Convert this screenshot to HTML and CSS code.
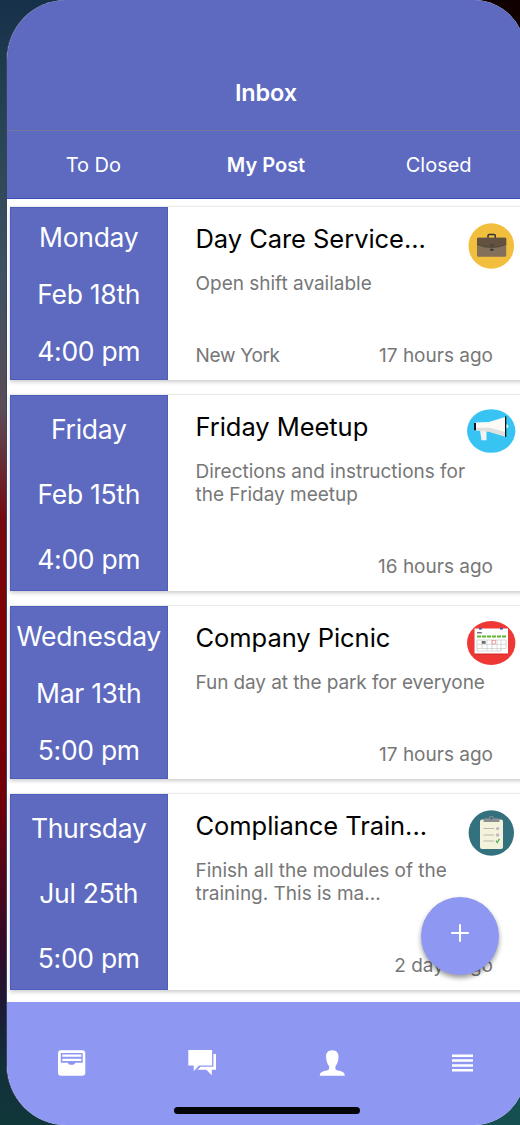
FILE: index.html
```html
<!DOCTYPE html>
<html lang="en">
<head>
<meta charset="utf-8">
<title>Inbox</title>
<link rel="stylesheet" href="styles.css">
</head>
<body>
<div class="phone">
  <header class="header"><h1 class="header-title">Inbox</h1></header>
  <nav class="tabs">
    <span class="tab">To Do</span>
    <span class="tab tab-active">My Post</span>
    <span class="tab">Closed</span>
  </nav>
  <main class="list">
    <article class="card">
      <div class="when"><span>Monday</span><span>Feb 18th</span><span>4:00 pm</span></div>
      <div class="body">
        <h2 class="title">Day Care Service...</h2>
        <p class="desc">Open shift available</p>
        <div class="meta"><span class="place">New York</span><span class="ago">17 hours ago</span></div>
      </div>
      <svg class="badge badge-job" viewBox="0 0 60 60">
        <circle cx="31.3" cy="31" r="22.8" fill="#f2be3e"/>
        <path d="M28 23v-2.2q0-1.3 1.300-1.300h4.700q1.300 0 1.300 1.300V23" fill="none" stroke="#2c3638" stroke-width="1.500"/>
        <rect x="17" y="22.700" width="29.200" height="19" rx="1.200" fill="#84705a"/>
        <path d="M18 22.700h27.200q1 0 1 1v5.800q-7 3-14.600 3t-14.600-3v-5.800q0-1 1-1z" fill="#62523f"/>
        <path d="M17 29.500q7 3 14.600 3t14.600-3" fill="none" stroke="#4c4233" stroke-width=".8"/>
        <rect x="30" y="29.300" width="3.500" height="1.800" fill="#444240"/><rect x="30" y="33.800" width="3.500" height="2" rx=".7" fill="#2c3638"/>
      </svg>
    </article>
    <article class="card card-tall">
      <div class="when"><span>Friday</span><span>Feb 15th</span><span>4:00 pm</span></div>
      <div class="body">
        <h2 class="title">Friday Meetup</h2>
        <p class="desc">Directions and instructions for the Friday meetup</p>
        <div class="meta"><span class="ago">16 hours ago</span></div>
      </div>
      <svg class="badge badge-news" viewBox="0 0 60 60">
        <ellipse cx="31.200" cy="31" rx="24.200" ry="21.800" fill="#38c4f3"/>
        <circle cx="46.300" cy="26.300" r="2" fill="#e8f5fa"/>
        <path d="M20 30h6.500v10.200h-5z" fill="#f3f3f3"/>
        <path d="M15.500 22.500l13.500-.5L45 17v19.500L29 31.500l-13.500-1.500z" fill="#fbfaf7"/>
        <path d="M15.500 27.800H30l15 4.200v4.500L29 31.700 15.500 30.500z" fill="#dedfdf"/>
        <path d="M14 23h2v7.200h-2zM45 16.300h1.300v20.700H45z" fill="#10171a"/>
      </svg>
    </article>
    <article class="card">
      <div class="when"><span>Wednesday</span><span>Mar 13th</span><span>5:00 pm</span></div>
      <div class="body">
        <h2 class="title">Company Picnic</h2>
        <p class="desc desc-fit">Fun day at the park for everyone</p>
        <div class="meta"><span class="ago">17 hours ago</span></div>
      </div>
      <svg class="badge badge-event" viewBox="0 0 60 60">
        <ellipse cx="31.200" cy="31" rx="24.200" ry="22" fill="#ee3836"/>
        <path d="M14 17h34v26H14z" fill="#d92d2c"/>
        <path d="M14.500 16.500H48v25H14.500z" fill="#fff"/>
        <path d="M19 16h2.800v1.400H19zM40 16h2.800v1.400H40z" fill="#2455b5"/>
        <path d="M17 20.800h4.800" stroke="#555" stroke-width="1.200"/>
        <path d="M17 24.500h29" stroke="#5cb82e" stroke-width="2" stroke-dasharray="4 1"/>
        <path d="M17 28h29v8.500H17zM17 32.300h29M22 28v8.500M27 28v10.500M32 28v10.500M37 28v10.500M41 28v10.500M17 36.500v2.500h24v-2.500" fill="none" stroke="#c9c9c9" stroke-width=".7"/>
        <path d="M21.800 29h3.800v2.800h-3.800z" fill="#6f6f6f"/>
        <path d="M32 28.500h3.500v3.500H32z" fill="none" stroke="#ef7777" stroke-width=".6"/>
      </svg>
    </article>
    <article class="card card-tall">
      <div class="when"><span>Thursday</span><span>Jul 25th</span><span>5:00 pm</span></div>
      <div class="body">
        <h2 class="title">Compliance Train...</h2>
        <p class="desc">Finish all the modules of the training. This is ma...</p>
        <div class="meta"><span class="ago">2 days ago</span></div>
      </div>
      <svg class="badge badge-task" viewBox="0 0 60 60">
        <circle cx="31.300" cy="33" r="22.700" fill="#34717f"/>
        <rect x="20" y="19.500" width="23" height="29.500" rx="2" fill="#f5f2dc"/>
        <path d="M23.500 22v-2q0-1.800 2-1.800h3.500q0-2.200 2.300-2.200t2.400 2.200h3.600q2.200 0 2.200 1.800v2z" fill="#8b8f93"/>
        <circle cx="31.400" cy="18.300" r="1.200" fill="#34717f"/>
        <path d="M23.500 28.500h10.500M23.500 35h10.500M23.500 41h10.500" stroke="#b9b9b0" stroke-width="1"/>
        <circle cx="37.600" cy="28.600" r="1.700" fill="#bcbcbc"/><circle cx="37.600" cy="35" r="1.700" fill="#bcbcbc"/>
        <path d="M36 40.700l1.300 1.900 2-3.700" fill="none" stroke="#4bae5d" stroke-width="1.200"/>
      </svg>
    </article>
    <button class="fab" aria-label="Add"><svg viewBox="0 0 18 18"><path d="M9 1v16M1 9h16" stroke="#fff" stroke-width="2" stroke-linecap="round"/></svg></button>
  </main>
  <footer class="nav">
    <div class="nav-item"><svg viewBox="0 0 30 30">
      <path fill="#fff" fill-rule="evenodd" d="M4 2.300h21.300q3 0 3 3v19.400q0 3-3 3H4q-3 0-3-3V5.300q0-3 3-3zM3.800 5v9.700H11q0 2 3.500 2t3.500-2h7.700V5z"/>
      <path fill="#fff" d="M5.300 6.500h19v2.300h-19zM5.300 10.800h19v2.200h-19z"/>
    </svg></div>
    <div class="nav-item"><svg viewBox="0 0 30 30">
      <path fill="#fff" d="M1.300 2h23.800v15.500H12l-5.300 5.800v-5.800H1.300z"/>
      <path fill="#fff" d="M26.400 6H29v15.700h-4.200v5.600l-5.500-5.600H10.500l3-3h12.900z"/>
    </svg></div>
    <div class="nav-item"><svg viewBox="0 0 30 30">
      <path fill="#fff" d="M15.200 2.200c4.200 0 6.600 2.800 6.300 6.700-.1 4-1.300 7.100-3 9.300-.4 3.100.3 3.900 3.500 4.500 4 .8 5.800 2 5.800 5H2.800c0-3 1.800-4.200 5.800-5 3.200-.6 3.900-1.400 3.500-4.500-1.700-2.200-2.900-5.300-3-9.300-.3-3.900 1.900-6.700 6.100-6.700z"/>
    </svg></div>
    <div class="nav-item"><svg viewBox="0 0 30 30">
      <path fill="#fff" d="M5 6.600h21v2.500H5zM5 11.200h21v2.500H5zM5 16.200h21v2.500H5zM5 21h21v2.500H5z"/>
    </svg></div>
    <div class="home-bar"></div>
  </footer>
</div>
</body>
</html>
```
FILE: styles.css
```css
* { box-sizing: border-box; }
body {
  margin: 0;
  width: 520px;
  height: 1125px;
  overflow: hidden;
  padding-left: 6px;
  font-family: Inter, "Liberation Sans", sans-serif;
  background:
    linear-gradient(#100000, #100000) right top / 200px 200px no-repeat,
    linear-gradient(#154f52, #154f52) right bottom / 200px 200px no-repeat,
    linear-gradient(#17304a 0, #2b4656 150px, #3d5261 270px, #5a4c57 410px, #760910 520px, #800000 650px, #700008 800px, #300b28 950px, #1b1b35 1010px, #122f38 1060px, #10373a 1125px);
}
.phone {
  width: 519px;
  height: 1125px;
  display: flex;
  flex-direction: column;
  overflow: hidden;
  border-left: 1px solid #38435f;
  border-radius: 60px 51px 51px 60px;
  background: #fff;
}
.header {
  height: 131px;
  flex: none;
  padding-top: 78px;
  background: #5d6abf;
  border-bottom: 1px solid #76779f;
  color: #fff;
}
.header-title {
  margin: 0;
  font-size: 23.5px;
  line-height: 30px;
  font-weight: 600;
  letter-spacing: -.1px;
  text-align: center;
}
.tabs {
  height: 68px;
  flex: none;
  display: grid;
  grid-template-columns: repeat(3, 1fr);
  align-items: center;
  text-align: center;
  background: #5d6abf;
  border-bottom: 1px solid #3550bd;
  color: #fff;
  font-size: 20px;
}
.tab-active { font-weight: 600; }
.list {
  position: relative;
  flex: none;
  height: 803px;
  padding: 8px 0 0 3px;
  display: flex;
  flex-direction: column;
  gap: 15px;
}
.card {
  position: relative;
  display: flex;
  height: 173px;
  flex: none;
  background: #fff;
  box-shadow: 0 -1px 1px rgba(0,0,0,.06), 0 2px 4px rgba(0,0,0,.2);
}
.card-tall { height: 196px; }
.when {
  width: 157.5px;
  padding-top: 1px;
  display: flex;
  flex-direction: column;
  justify-content: space-around;
  align-items: center;
  background: #5d6abf;
  box-shadow: inset 0 0 0 1px #4c5dbb;
  color: #fff;
  font-size: 26.5px;
  font-weight: 400;
  line-height: 34px;
  letter-spacing: -.3px;
  white-space: nowrap;
}
.body {
  width: 325.5px;
  display: flex;
  flex-direction: column;
  padding: 15px 0 12px 28px;
}
.title {
  margin: 0 0 15.5px;
  font-size: 25.5px;
  line-height: 34px;
  font-weight: 400;
  letter-spacing: -.05px;
  color: #000;
  white-space: nowrap;
}
.desc {
  margin: 0;
  width: 294px;
  font-size: 19px;
  line-height: 23.5px;
  letter-spacing: -.01px;
  color: #777;
}
.desc-fit { letter-spacing: -.09px; }
.meta {
  margin-top: auto;
  display: flex;
  font-size: 19px;
  line-height: 24px;
  color: #777;
}
.place { letter-spacing: -.3px; }
.ago { margin-left: auto; }
.badge {
  position: absolute;
  left: 450px;
  width: 60px;
  height: 60px;
}
.badge-job { top: 8px; }
.badge-news { top: 5px; }
.badge-event { top: 6px; }
.badge-task { top: 6px; }
.fab {
  position: absolute;
  left: 414px;
  top: 697.5px;
  width: 78px;
  height: 78px;
  border: 0;
  border-radius: 50%;
  padding: 0;
  display: grid;
  place-items: center;
  background: #8e98f3;
  box-shadow: 0 3px 5px rgba(0,0,0,.4);
}
.fab svg { width: 18px; height: 18px; margin: 0 1px 5px 0; }
.nav {
  position: relative;
  flex: 1;
  display: grid;
  grid-template-columns: repeat(4, 130px);
  padding-top: 46px;
  background: #8e98f3;
}
.nav-item { text-align: center; margin-left: -1px; }
.nav-item svg { width: 30px; height: 30px; }
.home-bar {
  position: absolute;
  left: 167px;
  top: 105px;
  width: 186px;
  height: 7px;
  border-radius: 4px;
  background: #050508;
}
```
